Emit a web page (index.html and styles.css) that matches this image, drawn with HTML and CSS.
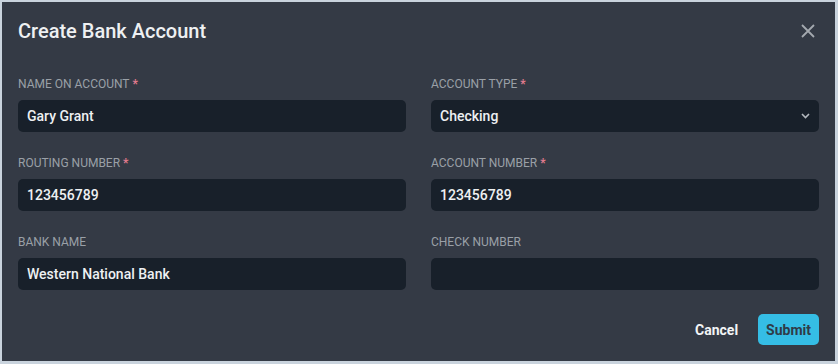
FILE: index.html
```html
<!DOCTYPE html>
<html lang="en">
<head>
  <meta charset="UTF-8" />
  <meta name="viewport" content="width=device-width, initial-scale=1.0"/>
  <title>Create Bank Account</title>
  <link rel="stylesheet" href="styles.css">
</head>
<body>
  <div class="dialog">
    <!-- CABEÇALHO -->
    <div class="dialog-header">
      <h1>Create Bank Account</h1>
      <button class="close-button" aria-label="Close">
        <svg width="14" height="14" viewBox="0 0 14 14">
          <path d="M1 1 L13 13 M13 1 L1 13" stroke="#a4a9af" stroke-width="1.8" fill="none"/>
        </svg>
      </button>
    </div>

    <!-- CAMPOS -->
    <div class="form-grid">
      <div class="field">
        <label>Name on Account<span class="req">*</span></label>
        <input type="text" class="text-box" value="Gary Grant">
      </div>
      <div class="field">
        <label>Account Type<span class="req">*</span></label>
        <div class="text-box select-box">
          <span>Checking</span>
          <svg width="9" height="6" viewBox="0 0 9 6">
            <path d="M1 1 L4.5 4.5 L8 1" stroke="#b3b8be" stroke-width="1.6" fill="none"/>
          </svg>
        </div>
      </div>
      <div class="field">
        <label>Routing Number<span class="req">*</span></label>
        <input type="text" class="text-box" value="123456789">
      </div>
      <div class="field">
        <label>Account Number<span class="req">*</span></label>
        <input type="text" class="text-box" value="123456789">
      </div>
      <div class="field">
        <label>Bank Name</label>
        <input type="text" class="text-box" value="Western National Bank">
      </div>
      <div class="field">
        <label>Check Number</label>
        <input type="text" class="text-box" value="">
      </div>
    </div>

    <!-- RODAPÉ -->
    <div class="dialog-footer">
      <button class="cancel-button">Cancel</button>
      <button class="submit-button">Submit</button>
    </div>
  </div>
</body>
</html>
```

FILE: styles.css
```css
body {
  margin: 0;
  padding: 2px 3px 3px 2px;
  background-color: #c9d3dd;
  font-family: Roboto, "Liberation Sans", sans-serif;
  height: 100vh;
  box-sizing: border-box;
  overflow: hidden;
}

.dialog {
  height: 100%;
  box-sizing: border-box;
  background-color: #343a45;
  padding: 17px 16px 16px 16px;
  display: flex;
  flex-direction: column;
}

.dialog-header {
  display: flex;
  align-items: center;
  justify-content: space-between;
  height: 24px;
}

h1 {
  margin: 0;
  font-size: 20px;
  font-weight: 500;
  line-height: 24px;
  color: #eef0f2;
}

.close-button {
  background: none;
  border: none;
  padding: 0;
  margin-right: 4px;
  width: 14px;
  height: 14px;
  display: flex;
  cursor: pointer;
}

.form-grid {
  margin-top: 33px;
  display: grid;
  grid-template-columns: 1fr 1fr;
  column-gap: 25px;
  row-gap: 23px;
}

.field {
  display: flex;
  flex-direction: column;
}

.field label {
  font-size: 12px;
  line-height: 16px;
  color: #9aa0a7;
  text-transform: uppercase;
  margin-bottom: 8px;
}

.req {
  color: #e07a8e;
  margin-left: 3px;
  font-weight: 700;
}

.text-box {
  height: 32px;
  box-sizing: border-box;
  border: none;
  outline: none;
  border-radius: 5px;
  background-color: #18202a;
  color: #eef0f2;
  font-family: Roboto, "Liberation Sans", sans-serif;
  font-size: 14px;
  font-weight: 500;
  padding: 0 9px;
  width: 100%;
}

.select-box {
  display: flex;
  align-items: center;
  justify-content: space-between;
  padding-right: 9px;
}

.dialog-footer {
  margin-top: 24px;
  display: flex;
  justify-content: flex-end;
  align-items: center;
  gap: 12px;
}

.cancel-button {
  background: none;
  border: none;
  color: #f2f4f6;
  font-family: Roboto, "Liberation Sans", sans-serif;
  font-size: 14px;
  font-weight: 700;
  padding: 0 8px;
  height: 31px;
  cursor: pointer;
}

.submit-button {
  background-color: #35bde5;
  border: none;
  border-radius: 5px;
  color: #2f3b48;
  font-family: Roboto, "Liberation Sans", sans-serif;
  font-size: 14px;
  font-weight: 700;
  height: 31px;
  padding: 0 8px;
  cursor: pointer;
}
```
